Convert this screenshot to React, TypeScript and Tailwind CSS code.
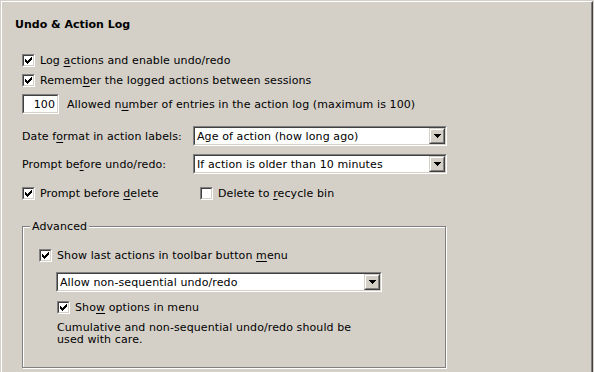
import React from "react";

// Classic Windows check mark, drawn pixel by pixel
const CheckMark = () => (
  <svg width="7" height="7" viewBox="0 0 7 7" shapeRendering="crispEdges">
    <rect x="6" y="0" width="1" height="1" fill="#000" />
    <rect x="5" y="1" width="2" height="1" fill="#000" />
    <rect x="0" y="2" width="1" height="1" fill="#000" />
    <rect x="4" y="2" width="3" height="1" fill="#000" />
    <rect x="0" y="3" width="2" height="1" fill="#000" />
    <rect x="3" y="3" width="3" height="1" fill="#000" />
    <rect x="0" y="4" width="5" height="1" fill="#000" />
    <rect x="1" y="5" width="3" height="1" fill="#000" />
    <rect x="2" y="6" width="1" height="1" fill="#000" />
  </svg>
);

const Sunken: React.FC<{ className?: string; children?: React.ReactNode }> = ({ className = "", children }) => (
  <div className={`border border-t-[#808080] border-l-[#808080] border-r-white border-b-white ${className}`}>
    <div className="w-full h-full border border-t-[#404040] border-l-[#404040] border-r-[#d4d0c8] border-b-[#d4d0c8] bg-white flex items-center">
      {children}
    </div>
  </div>
);

const Checkbox: React.FC<{ checked?: boolean }> = ({ checked }) => (
  <Sunken className="w-[13px] h-[13px] shrink-0">
    <div className="w-full h-full flex items-center justify-center">{checked && <CheckMark />}</div>
  </Sunken>
);

const Check: React.FC<{ checked?: boolean; children: React.ReactNode; className?: string }> = ({
  checked,
  children,
  className = "",
}) => (
  <div className={`flex items-center h-[13px] ${className}`}>
    <Checkbox checked={checked} />
    <span className="ml-[5px] whitespace-nowrap">{children}</span>
  </div>
);

const Select: React.FC<{ value: string; className?: string }> = ({ value, className = "" }) => (
  <Sunken className={`h-[20px] shrink-0 ${className}`}>
    <span className="flex-1 pl-[2px] whitespace-nowrap overflow-hidden">{value}</span>
    <div className="w-[16px] h-[16px] border border-t-[#d4d0c8] border-l-[#d4d0c8] border-r-[#404040] border-b-[#404040]">
      <div className="w-full h-full border border-t-white border-l-white border-r-[#808080] border-b-[#808080] bg-[#d4d0c8] flex items-center justify-center">
        <svg width="7" height="4" viewBox="0 0 7 4" shapeRendering="crispEdges">
          <path d="M0 0h7v1h-1v1h-1v1h-1v1h-1v-1h-1v-1h-1v-1h-1z" fill="#000" />
        </svg>
      </div>
    </div>
  </Sunken>
);

const U: React.FC<{ children: React.ReactNode }> = ({ children }) => (
  <span className="underline underline-offset-[2px]">{children}</span>
);

export default function App() {
  return (
    <div
      className="w-[594px] h-[372px] overflow-hidden bg-[#d4d0c8] pt-px pl-px text-[11px] leading-[13px] tracking-[0.1px] text-black"
      style={{ fontFamily: '"DejaVu Sans", Verdana, sans-serif' }}
    >
      <div className="w-[592px] h-[400px] border-l border-t border-white border-r border-r-[#404040] shadow-[inset_-1px_0_0_#808080] pt-[16px] pl-[13px]">
        <div className="font-bold tracking-normal">Undo &amp; Action Log</div>

        <div className="pl-[7px]">
          <Check checked className="mt-[23px]">
            Log <U>a</U>ctions and enable undo/redo
          </Check>
          <Check checked className="mt-[7px]">
            Remem<U>b</U>er the logged actions between sessions
          </Check>

          <div className="flex items-center mt-[7px]">
            <Sunken className="w-[37px] h-[20px]">
              <span className="w-full text-right pr-[2px]">100</span>
            </Sunken>
            <span className="ml-[8px] whitespace-nowrap">
              Allowed n<U>u</U>mber of entries in the action log (maximum is 100)
            </span>
          </div>

          <div className="flex items-center mt-[12px]">
            <span className="w-[171px] whitespace-nowrap">
              Date f<U>o</U>rmat in action labels:
            </span>
            <Select value="Age of action (how long ago)" className="w-[254px]" />
          </div>

          <div className="flex items-center mt-[8px]">
            <span className="w-[171px] whitespace-nowrap">
              Prompt be<U>f</U>ore undo/redo:
            </span>
            <Select value="If action is older than 10 minutes" className="w-[254px]" />
          </div>

          <div className="flex items-center mt-[13px]">
            <Check checked className="w-[178px]">
              Prompt before <U>d</U>elete
            </Check>
            <Check>
              Delete to <U>r</U>ecycle bin
            </Check>
          </div>

          <div className="relative mt-[26px] w-[424px] h-[142px] border border-[#808080] shadow-[inset_1px_1px_0_#ffffff,1px_1px_0_#ffffff] pt-[22px] pl-[16px]">
            <span className="absolute left-[7px] -top-[7px] px-[2px] bg-[#d4d0c8]">Advanced</span>
            <Check checked>
              Show last actions in toolbar button <U>m</U>enu
            </Check>
            <div className="pl-[17px]">
              <Select value="Allow non-sequential undo/redo" className="w-[326px] mt-[10px]" />
              <Check checked className="mt-[9px] ml-px">
                Sho<U>w</U> options in menu
              </Check>
              <p className="mt-[8px] ml-px leading-[12px]">
                Cumulative and non-sequential undo/redo should be
                <br />
                used with care.
              </p>
            </div>
          </div>
        </div>
      </div>
    </div>
  );
}
